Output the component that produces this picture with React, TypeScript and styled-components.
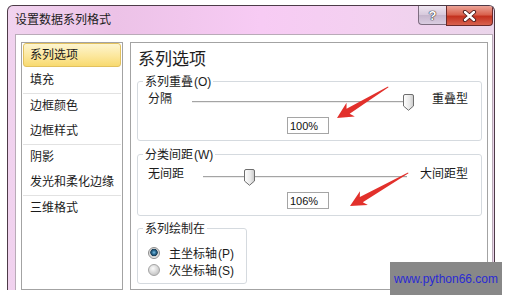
import React from "react";
import styled, { createGlobalStyle, css } from "styled-components";

const GlobalStyle = createGlobalStyle`
  html, body { margin: 0; padding: 0; background: #ffffff; }
  body {
    font-family: "Liberation Sans", "Noto Sans CJK SC", sans-serif;
    font-size: 12px;
    color: #1b1b1b;
  }
  * { box-sizing: border-box; }
`;

const Page = styled.div`
  position: relative;
  width: 507px;
  height: 301px;
  padding: 5px 0 0 7px;
  overflow: hidden;
  background: #fff;
`;

const Window = styled.div`
  width: 488px;
  height: 285px;
  display: flex;
  flex-direction: column;
  border: 1px solid #4d3b48;
  border-bottom: none;
  border-radius: 6px 6px 0 0;
  overflow: hidden;
  background: linear-gradient(
    90deg,
    #f1d3ef 0%,
    #ecc2e7 22%,
    #f7cbf4 52%,
    #f3d1f0 76%,
    #ead5ea 100%
  );
`;

const TitleBar = styled.div`
  height: 28px;
  flex-shrink: 0;
  display: flex;
  align-items: flex-start;
`;

const Title = styled.div`
  flex: 1;
  padding-left: 7px;
  line-height: 28px;
  font-size: 12px;
  color: #1c1c1c;
`;

const CaptionButtons = styled.div`
  display: flex;
  margin-right: 1px;
`;

const HelpButton = styled.div`
  width: 28px;
  height: 19px;
  border: 1px solid #7d6d80;
  border-top: none;
  border-right: none;
  border-radius: 0 0 0 4px;
  background: linear-gradient(#efe6f1, #d8cadd 48%, #c6b6cd 52%, #dacde1);
  display: flex;
  align-items: center;
  justify-content: center;
  color: #ffffff;
  font: bold 13px "Liberation Sans", sans-serif;
  text-shadow: 0 0 1px #2d2d2d, 0 0 1px #2d2d2d, 0 0 1px #2d2d2d;
`;

const CloseButton = styled.div`
  width: 47px;
  height: 20px;
  border: 1px solid #6b2a2a;
  border-top: none;
  border-radius: 0 0 4px 0;
  background: linear-gradient(#eca397, #d9634f 45%, #c4321f 55%, #d8624f);
  display: flex;
  align-items: center;
  justify-content: center;
`;

const Body = styled.div`
  flex: 1;
  min-height: 0;
  display: flex;
  padding: 0 1px 0 7px;
`;

const Client = styled.div`
  flex: 1;
  display: flex;
  gap: 7px;
  padding: 7px 4px 0 5px;
  background: #ffffff;
  border: 1px solid #b9abb8;
  border-bottom: none;
`;

const NavList = styled.div`
  width: 102px;
  flex-shrink: 0;
  display: flex;
  flex-direction: column;
  border: 1px solid #a3a3a3;
  background: #ffffff;
`;

const NavItem = styled.div<{ $selected?: boolean }>`
  height: 25px;
  margin: 0 1px;
  padding-left: 7px;
  line-height: 25px;
  font-size: 12px;
  white-space: nowrap;
  color: #1b1b1b;
  ${(p) =>
    p.$selected &&
    css`
      height: 24px;
      margin-bottom: 1px;
      padding-left: 6px;
      line-height: 22px;
      border: 1px solid #e2c15e;
      border-radius: 3px;
      background: linear-gradient(#fdf5d0, #fce79c 55%, #f8da70);
    `}
`;

const NavSeparator = styled.div`
  height: 1px;
  margin: 0 1px;
  background: #e2e2e2;
`;

const OptionsPanel = styled.div`
  flex: 1;
  display: flex;
  flex-direction: column;
  align-items: flex-start;
  padding: 7px 5px 0 6px;
  border: 1px solid #a3a3a3;
  background: #ffffff;
`;

const PanelTitle = styled.div`
  margin-left: 1px;
  font-size: 17px;
  line-height: 20px;
  color: #1e1e1e;
`;

const Group = styled.fieldset<{ $mt: number; $width?: number }>`
  margin: ${(p) => p.$mt}px 0 0;
  padding: 0;
  min-width: 0;
  width: ${(p) => (p.$width ? `${p.$width}px` : "100%")};
  border: 1px solid #d5dadf;
  border-radius: 3px;
`;

const Legend = styled.legend`
  margin-left: 5px;
  padding: 2px 2px 0;
  font-size: 12px;
  line-height: 14px;
  color: #1b1b1b;
  white-space: nowrap;
`;

const Mnemonic = styled.span`
  font-size: 12px;
  margin-left: 1px;
`;

const GroupContent = styled.div<{ $pt: number; $pb: number; $pr?: number }>`
  padding: ${(p) => p.$pt}px ${(p) => p.$pr ?? 13}px ${(p) => p.$pb}px 10px;
`;

const SliderRow = styled.div`
  display: flex;
  align-items: flex-start;
`;

const SideLabel = styled.span`
  flex-shrink: 0;
  white-space: nowrap;
  line-height: 14px;
  font-size: 12px;
`;

const Slider = styled.div<{ $ml: number; $mr: number }>`
  position: relative;
  flex: 1;
  height: 18px;
  margin: 2px ${(p) => p.$mr}px 0 ${(p) => p.$ml}px;
`;

const Track = styled.div`
  margin-top: 7px;
  height: 2px;
  border-top: 1px solid #a4a4a4;
  border-bottom: 1px solid #ececec;
`;

const Thumb = styled.svg`
  position: absolute;
  top: 0;
  width: 11px;
  height: 17px;
`;

const PercentBox = styled.input`
  display: block;
  margin: 5px auto 0;
  width: 42px;
  height: 17px;
  padding: 0 0 0 2px;
  border: 1px solid #a5a5a5;
  background: #ffffff;
  color: #111;
  font: 11px "Liberation Sans", sans-serif;
  outline: none;
`;

const RadioRow = styled.label`
  display: flex;
  align-items: center;
  gap: 9px;
  height: 17px;
  font-size: 12px;
  white-space: nowrap;
`;

const RadioDot = styled.span<{ $checked?: boolean }>`
  width: 12px;
  height: 12px;
  border-radius: 50%;
  flex-shrink: 0;
  ${(p) =>
    p.$checked
      ? css`
          border: 1px solid #8c8c8c;
          background: radial-gradient(
            circle at 50% 45%,
            #7cc0e6 0,
            #2a6a92 2px,
            #173c55 3.4px,
            #cfcfcf 4px,
            #f4f4f4 5.5px
          );
        `
      : css`
          border: 1px solid #a3a3a3;
          background: radial-gradient(circle at 40% 35%, #fbfbfb 0, #e3e3e3 3px, #cbcbcb 6px);
        `}
`;

const Overlay = styled.svg`
  position: absolute;
  left: 0;
  top: 0;
  pointer-events: none;
`;

const Watermark = styled.div`
  position: absolute;
  left: 390px;
  top: 262px;
  width: 112px;
  height: 33px;
  display: flex;
  align-items: center;
  justify-content: center;
  background: #888888;
  color: #2a2ad4;
  font: 12px "Liberation Sans", sans-serif;
`;

function SliderThumb({ frac, id }: { frac: number; id: string }) {
  return (
    <Thumb
      viewBox="0 0 11 17"
      style={{ left: `calc((100% - 11px) * ${frac})` }}
    >
      <defs>
        <linearGradient id={id} x1="0" y1="0" x2="1" y2="0">
          <stop offset="0" stopColor="#ffffff" />
          <stop offset="0.6" stopColor="#e9e9e9" />
          <stop offset="1" stopColor="#c9c9c9" />
        </linearGradient>
      </defs>
      <path
        d="M2 0.5 H9 A1.5 1.5 0 0 1 10.5 2 V12 L5.5 16.3 L0.5 12 V2 A1.5 1.5 0 0 1 2 0.5 Z"
        fill={`url(#${id})`}
        stroke="#6e6e6e"
        strokeWidth="1"
      />
    </Thumb>
  );
}

function Arrow({ x, y, angle, len }: { x: number; y: number; angle: number; len: number }) {
  return (
    <g transform={`translate(${x} ${y}) rotate(${angle})`}>
      <polygon
        points={`0,0 -16,-8 -13,-3 ${-len},-0.5 ${-len},0.5 -13,3 -16,8`}
        fill="#e2302b"
      />
    </g>
  );
}

const navGroups = [
  ["系列选项", "填充"],
  ["边框颜色", "边框样式"],
  ["阴影", "发光和柔化边缘"],
  ["三维格式"],
];

export default function App() {
  return (
    <>
      <GlobalStyle />
      <Page>
        <Window>
          <TitleBar>
            <Title>设置数据系列格式</Title>
            <CaptionButtons>
              <HelpButton>?</HelpButton>
              <CloseButton>
                <svg width="15" height="12" viewBox="0 0 15 12">
                  <path d="M3 2 L12 10 M12 2 L3 10" stroke="#4a1a1a" strokeWidth="4.2" strokeLinecap="round" />
                  <path d="M3 2 L12 10 M12 2 L3 10" stroke="#ffffff" strokeWidth="2.4" strokeLinecap="round" />
                </svg>
              </CloseButton>
            </CaptionButtons>
          </TitleBar>
          <Body>
            <Client>
              <NavList>
                {navGroups.map((g, gi) => (
                  <React.Fragment key={gi}>
                    {gi > 0 && <NavSeparator />}
                    {g.map((label) => (
                      <NavItem key={label} $selected={label === "系列选项"}>
                        {label}
                      </NavItem>
                    ))}
                  </React.Fragment>
                ))}
              </NavList>
              <OptionsPanel>
                <PanelTitle>系列选项</PanelTitle>
                <Group $mt={3}>
                  <Legend>
                    系列重叠<Mnemonic>(O)</Mnemonic>
                  </Legend>
                  <GroupContent $pt={3} $pb={6}>
                    <SliderRow>
                      <SideLabel>分隔</SideLabel>
                      <Slider $ml={20} $mr={18}>
                        <Track />
                        <SliderThumb frac={1} id="th1" />
                      </Slider>
                      <SideLabel>重叠型</SideLabel>
                    </SliderRow>
                    <PercentBox readOnly value="100%" />
                  </GroupContent>
                </Group>
                <Group $mt={5}>
                  <Legend>
                    分类间距<Mnemonic>(W)</Mnemonic>
                  </Legend>
                  <GroupContent $pt={5} $pb={6}>
                    <SliderRow>
                      <SideLabel>无间距</SideLabel>
                      <Slider $ml={19} $mr={13}>
                        <Track />
                        <SliderThumb frac={106 / 500} id="th2" />
                      </Slider>
                      <SideLabel>大间距型</SideLabel>
                    </SliderRow>
                    <PercentBox readOnly value="106%" />
                  </GroupContent>
                </Group>
                <Group $mt={4} $width={110}>
                  <Legend>系列绘制在</Legend>
                  <GroupContent $pt={8} $pb={5} $pr={0}>
                    <RadioRow>
                      <RadioDot $checked />
                      <span>
                        主坐标轴<Mnemonic>(P)</Mnemonic>
                      </span>
                    </RadioRow>
                    <RadioRow>
                      <RadioDot />
                      <span>
                        次坐标轴<Mnemonic>(S)</Mnemonic>
                      </span>
                    </RadioRow>
                  </GroupContent>
                </Group>
              </OptionsPanel>
            </Client>
          </Body>
        </Window>
        <Overlay width="507" height="301" viewBox="0 0 507 301">
          <Arrow x={337} y={118} angle={148.7} len={60} />
          <Arrow x={350} y={206} angle={150.4} len={67} />
        </Overlay>
        <Watermark>www.python66.com</Watermark>
      </Page>
    </>
  );
}
